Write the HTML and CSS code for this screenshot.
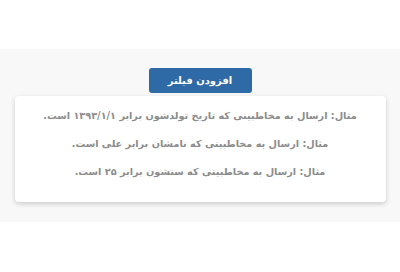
FILE: index.html
```html
<!DOCTYPE html>
<html lang="fa" dir="rtl">
<head>
    <meta charset="UTF-8">
    <meta name="viewport" content="width=device-width, initial-scale=1.0">
    <title>افزودن فیلتر</title>
    <link rel="stylesheet" href="styles.css">
</head>
<body>
    <div class="top-space"></div>
    <div class="filter-section">
        <button class="add-filter">افزودن فیلتر</button>
        <div class="examples">
            <p>مثال: ارسال به مخاطبینی که تاریخ تولدشون برابر ۱۳۹۳/۱/۱ است.</p>
            <p>مثال: ارسال به مخاطبینی که نامشان برابر علی است.</p>
            <p>مثال: ارسال به مخاطبینی که سنشون برابر ۲۵ است.</p>
        </div>
    </div>
</body>
</html>
```

FILE: styles.css
```css
body {
    margin: 0;
    background-color: #ffffff;
    font-family: "DejaVu Sans", "Noto Sans", sans-serif;
}
.top-space {
    height: 49px;
}
.filter-section {
    background-color: #f8f8f8;
    padding: 19px 0 20px;
    display: flex;
    flex-direction: column;
    align-items: center;
}
.add-filter {
    width: 103px;
    height: 25px;
    background-color: #2e6aa6;
    color: white;
    border: none;
    border-radius: 3px;
    font-family: inherit;
    font-size: 10px;
    font-weight: bold;
    padding: 0;
}
.examples {
    box-sizing: border-box;
    width: 371px;
    margin-top: 3px;
    padding: 6px 0 16px;
    background: white;
    border-radius: 4px;
    box-shadow: 0 2px 5px rgba(0,0,0,0.18);
    text-align: center;
}
.examples p {
    margin: 0;
    line-height: 28px;
    font-size: 9.7px;
    font-weight: bold;
    color: #8c8c8c;
}
```
